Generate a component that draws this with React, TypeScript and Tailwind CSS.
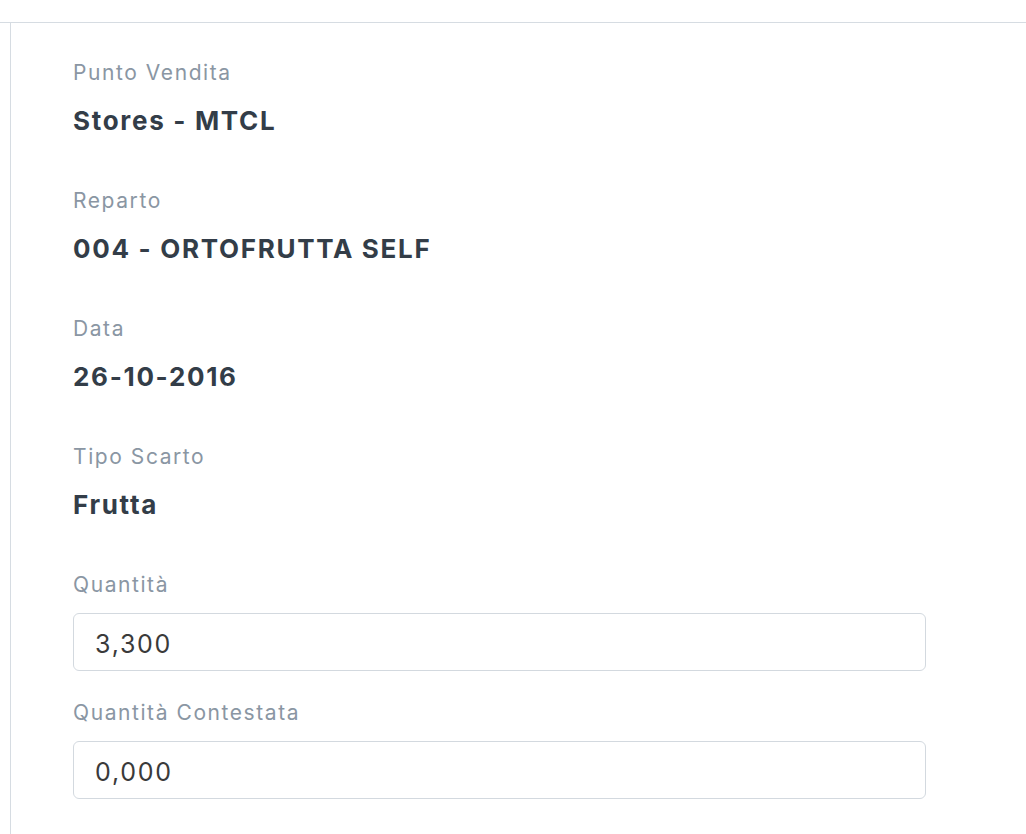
import React from "react";

const fields = [
  { label: "Punto Vendita", value: "Stores - MTCL" },
  { label: "Reparto", value: "004 - ORTOFRUTTA SELF" },
  { label: "Data", value: "26-10-2016" },
  { label: "Tipo Scarto", value: "Frutta" },
];

const inputs = [
  { label: "Quantità", value: "3,300" },
  { label: "Quantità Contestata", value: "0,000" },
];

export default function App() {
  return (
    <div
      className="min-h-screen bg-white pt-[22px]"
      style={{ fontFamily: "Inter, 'Noto Sans', sans-serif" }}
    >
      <div className="border-t border-[#d6dce2]">
        <div className="ml-[10px] min-h-[811px] border-l border-[#d6dce2] pl-[62px] pt-[36px]">
          {fields.map((f) => (
            <div key={f.label} className="mb-[50px]">
              <div className="text-[21px] leading-7 tracking-[0.075em] text-[#8a96a3]">{f.label}</div>
              <div className="mt-[18px] text-[26px] font-bold leading-8 tracking-[0.065em] text-[#333d48]">
                {f.value}
              </div>
            </div>
          ))}
          {inputs.map((f) => (
            <div key={f.label} className="mb-[28px] w-[853px]">
              <div className="text-[21px] leading-7 tracking-[0.075em] text-[#8a96a3]">{f.label}</div>
              <input
                readOnly
                value={f.value}
                className="mt-[14px] h-[58px] w-full rounded-[6px] border border-[#d3d9df] bg-white px-[21px] pt-[3px] text-[25px] tracking-[0.07em] text-[#3a3a3a] outline-none"
              />
            </div>
          ))}
        </div>
      </div>
    </div>
  );
}
